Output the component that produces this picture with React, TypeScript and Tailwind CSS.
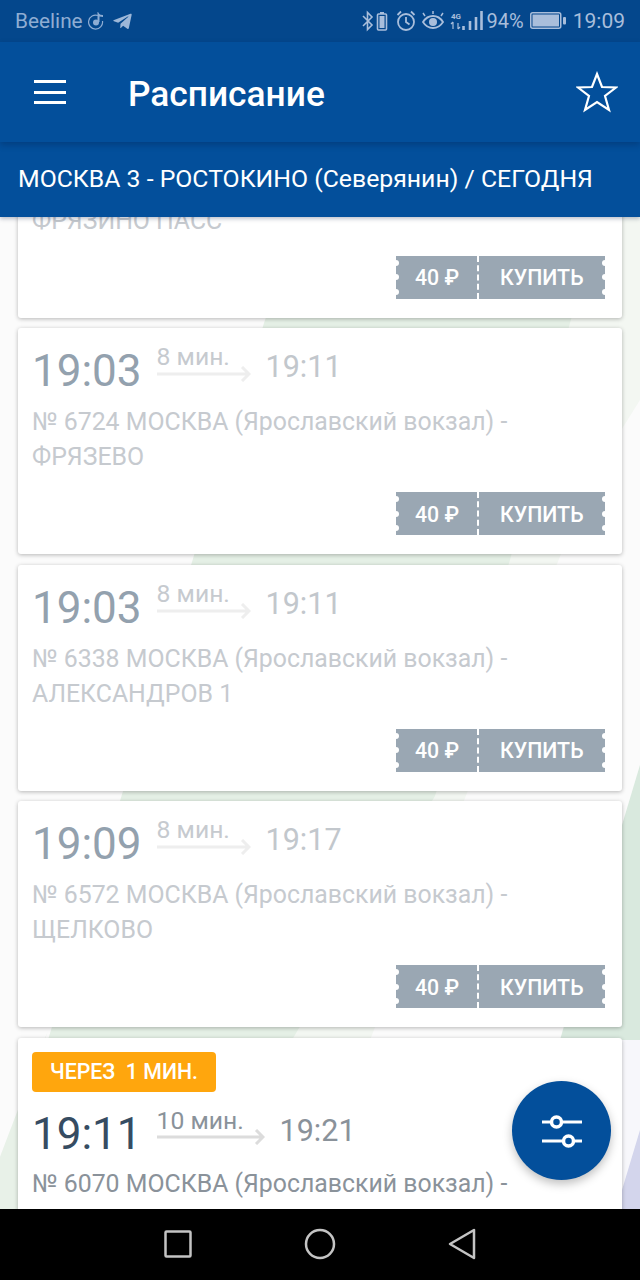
import { FaTelegramPlane } from "react-icons/fa";

type Train = {
  id: string;
  depart: string;
  arrive: string;
  duration: string;
  destination: string;
  soon?: string;
};

const trains: Train[] = [
  { id: "6122", depart: "19:00", arrive: "19:08", duration: "8 мин.", destination: "ФРЯЗИНО ПАСС" },
  { id: "6724", depart: "19:03", arrive: "19:11", duration: "8 мин.", destination: "ФРЯЗЕВО" },
  { id: "6338", depart: "19:03", arrive: "19:11", duration: "8 мин.", destination: "АЛЕКСАНДРОВ 1" },
  { id: "6572", depart: "19:09", arrive: "19:17", duration: "8 мин.", destination: "ЩЕЛКОВО" },
  { id: "6070", depart: "19:11", arrive: "19:21", duration: "10 мин.", destination: "МОНИНО", soon: "ЧЕРЕЗ  1 МИН." },
];

function Background() {
  return (
    <svg className="absolute inset-0 h-full w-full" viewBox="0 217 640 992" preserveAspectRatio="none">
      <rect x="0" y="217" width="640" height="992" fill="#fbfbfb" />
      <polygon points="640,217 640,400 590,480 370,1040 48,1040 340,217" fill="#f3f7f2" />
      <polygon points="600,217 570,323 510,560 435,796 292,1040 48,1040 264,323 300,217" fill="#e5f0e6" />
      <polygon points="48,1031 -20,1209 0,1209 18,1209 18,1100" fill="#e8f1e8" />
      <polygon points="640,765 622,825 560,1040 640,1040" fill="#d9e9de" />
      <polygon points="640,1040 640,1209 600,1209 600,1040" fill="#f7f7fb" />
      <polygon points="640,1130 622,1190 612,1209 640,1209" fill="#d3d5ec" />
    </svg>
  );
}

function StatusIcons() {
  return (
    <svg width="122" height="24" viewBox="0 0 122 24" fill="none" stroke="#a9bedb" strokeWidth="1.6">
      {/* bluetooth */}
      <path d="M1 7l9 9-4.500 4.500V3.500L10 8l-9 9" />
      {/* small battery */}
      <rect x="15.500" y="5" width="9" height="16" rx="1" />
      <rect x="17.500" y="7" width="5" height="12" fill="#a9bedb" stroke="none" />
      <rect x="18" y="3" width="4" height="2" fill="#a9bedb" stroke="none" />
      {/* alarm */}
      <circle cx="44" cy="13" r="8" strokeWidth="1.800" />
      <path d="M44 8V13l3.500 2.500M35.500 6L39 2.500M52.500 6L49 2.500" strokeWidth="1.800" />
      {/* eye */}
      <path d="M61 13c2.500-4 5.500-6 10-6s7.500 2 10 6c-2.500 4-5.500 6-10 6s-7.500-2-10-6z" strokeWidth="1.800" />
      <circle cx="71" cy="13" r="4" fill="#a9bedb" stroke="none" />
      <path d="M63 7l-2-3M71 5V2M79 7l2-3" strokeWidth="1.500" />
      {/* signal */}
      <text x="89" y="10" fontSize="8" fontWeight="700" fill="#a9bedb" stroke="none">
        4G
      </text>
      <path d="M91 13v7M91 13l-2 2" strokeWidth="1.200" />
      <path d="M96 20v-6M96 20l2-2" strokeWidth="1.200" />
      <path d="M101.500 21v-4M108 21v-9M114 21v-13M119.500 21V2" strokeWidth="2.600" />
    </svg>
  );
}

function BatteryIcon() {
  return (
    <svg width="36" height="18" viewBox="0 0 36 18" fill="none">
      <rect x="0.750" y="0.750" width="30" height="15.500" rx="2" stroke="#a9bedb" strokeWidth="1.500" />
      <rect x="2.500" y="2.500" width="26.500" height="12" fill="#a9bedb" />
      <rect x="33" y="5" width="3" height="7.500" rx="1" fill="#a9bedb" />
    </svg>
  );
}

function StatusBar() {
  return (
    <div className="flex h-[42px] shrink-0 items-center bg-[#04478c] pl-[15px] pr-[15px] text-[20px] leading-none text-[#a9bedb]">
      <span className="text-[20.800px] text-[#8fadd3]">Beeline</span>
      <svg className="ml-[5px]" width="17" height="18" viewBox="0 0 17 18" fill="none" stroke="#8fadd3" strokeWidth="1.200">
        <path d="M10 3.500A7 7 0 1 0 14.500 9" />
        <circle cx="8" cy="10.500" r="3" fill="#8fadd3" stroke="none" />
        <path d="M10.500 10V2.500c1 1.500 3 1.500 4.500 1.500" strokeWidth="2" />
      </svg>
      <FaTelegramPlane className="ml-[7px] text-[21px] text-[#9db7d8]" />
      <div className="ml-auto flex items-center">
        <StatusIcons />
        <span className="ml-[3px] text-[20px]">94%</span>
        <span className="ml-[6px]">
          <BatteryIcon />
        </span>
        <span className="ml-[7px] text-[21px]">19:09</span>
      </div>
    </div>
  );
}

function Toolbar() {
  return (
    <div className="relative z-20 flex h-[100px] shrink-0 items-center bg-[#034f9b] pl-[34px] pr-[22px] shadow-[0_3px_6px_rgba(0,20,60,0.28)]">
      <div className="flex h-[24px] w-[32px] flex-col justify-between">
        <div className="h-[3px] bg-white" />
        <div className="h-[3px] bg-white" />
        <div className="h-[3px] bg-white" />
      </div>
      <h1 className="ml-[62px] mt-[5px] text-[35.300px] font-medium leading-none text-white">Расписание</h1>
      <svg className="ml-auto" width="42" height="42" viewBox="0 0 42 42" fill="none">
        <polygon
          points="21,3 26,16 40,16.500 29,25 33,39 21,31 9,39 13,25 2,16.500 16,16"
          stroke="#fff"
          strokeWidth="2.200"
          strokeLinejoin="miter"
        />
      </svg>
    </div>
  );
}

function Notches({ side }: { side: "left" | "right" }) {
  return (
    <div
      className={[
        "absolute top-[3px] flex h-[37px] flex-col justify-between",
        side === "left" ? "left-[-3px]" : "right-[-3px]",
      ].join(" ")}
    >
      <span className="mt-[1px] h-[6px] w-[6px] rounded-full bg-white" />
      <span className="h-[6px] w-[6px] rounded-full bg-white" />
      <span className="mb-[1px] h-[6px] w-[6px] rounded-full bg-white" />
    </div>
  );
}

function BuyTicket() {
  return (
    <div className="relative ml-auto mr-[3px] flex h-[43px] w-[209px] items-center overflow-hidden bg-[#9aa7b3] text-[21.300px] font-medium leading-none text-white">
      <Notches side="left" />
      <div className="mt-[2px] w-[81px] pl-[19px]">40 ₽</div>
      <div className="h-full border-l-2 border-dashed border-white" />
      <div className="mt-[2px] pl-[21px]">КУПИТЬ</div>
      <Notches side="right" />
    </div>
  );
}

function TrainCard({ train }: { train: Train }) {
  const active = Boolean(train.soon);
  const arrowWidth = active ? 108 : 94;

  return (
    <div
      className={[
        "shrink-0 rounded-[3px] bg-white px-[14px] pt-[14px] shadow-[0_1px_4px_rgba(0,0,0,0.28)]",
        active ? "h-[240px]" : "h-[226px]",
      ].join(" ")}
    >
      {train.soon && (
        <div className="mb-[14px] flex h-[40px] w-[184px] items-center whitespace-pre rounded-[4px] bg-[#ffa60d] pl-[18px] text-[21.300px] font-medium leading-none text-white">
          {train.soon}
        </div>
      )}
      <div className={["flex items-start", active ? "h-[54px]" : "h-[56px]"].join(" ")}>
        <span
          className={[
            "text-[44px] leading-[50px]",
            active ? "mt-[3px] text-[#364c62]" : "mt-[4px] text-[#93a1ae]",
          ].join(" ")}
        >
          {train.depart}
        </span>
        <div className="ml-[15px]">
          <div
            className={[
              "mt-[1px] text-[24.700px] leading-[28px]",
              active ? "text-[#8a929a]" : "text-[#c6cacf]",
            ].join(" ")}
          >
            {train.duration}
          </div>
          <svg
            className={["block", active ? "mt-[-6px]" : "mt-[-5px]"].join(" ")}
            width={arrowWidth}
            height="16"
            viewBox={`0 0 ${arrowWidth} 16`}
            fill="none"
          >
            <path
              d={`M0 8H${arrowWidth - 2}M${arrowWidth - 9} 1l7 7-7 7`}
              stroke={active ? "#dcdcdc" : "#eeeeee"}
              strokeWidth="3"
            />
          </svg>
        </div>
        <span
          className={[
            "ml-[15px] mt-[7px] text-[30.500px] leading-[36px]",
            active ? "text-[#8a929a]" : "text-[#c2c7cc]",
          ].join(" ")}
        >
          {train.arrive}
        </span>
      </div>
      <div
        className={[
          "mt-[6px] h-[70px] text-[24.850px] leading-[35px]",
          active ? "text-[#8a929a]" : "text-[#c6cacf]",
        ].join(" ")}
      >
        <div>№ {train.id} МОСКВА (Ярославский вокзал) -</div>
        <div>{train.destination}</div>
      </div>
      <div className="mt-[18px] flex">
        <BuyTicket />
      </div>
    </div>
  );
}

function NavBar() {
  return (
    <div className="z-20 flex h-[71px] shrink-0 items-center justify-center bg-black">
      <svg width="640" height="71" viewBox="0 0 640 71" fill="none" stroke="#c4c4c4" strokeWidth="2.500">
        <rect x="165.500" y="22.500" width="25" height="25" rx="1" />
        <circle cx="320" cy="35" r="14" />
        <path d="M450 35l24-14v28z" strokeLinejoin="round" />
      </svg>
    </div>
  );
}

export default function App() {
  return (
    <div
      className="relative flex h-[1280px] w-[640px] flex-col overflow-hidden bg-[#fbfbfb]"
      style={{ fontFamily: "Roboto, sans-serif" }}
    >
      <StatusBar />
      <Toolbar />
      <div className="relative z-10 flex h-[75px] shrink-0 items-center whitespace-nowrap bg-[#034f9b] pl-[18px] text-[24.800px] leading-none text-white shadow-[0_2px_4px_rgba(0,20,60,0.25)]">
        МОСКВА 3 - РОСТОКИНО (Северянин) / СЕГОДНЯ
      </div>
      <div className="relative min-h-0 flex-1 overflow-hidden">
        <Background />
        <div className="relative mt-[-125.500px] flex flex-col gap-[10.500px] px-[18px]">
          {trains.map((train) => (
            <TrainCard key={train.id} train={train} />
          ))}
        </div>
      </div>
      <NavBar />
      <button
        type="button"
        className="absolute left-[512px] top-[1081px] z-30 flex h-[99px] w-[99px] items-center justify-center rounded-full bg-[#034f9b] shadow-[0_4px_10px_rgba(0,0,0,0.25)]"
      >
        <svg width="42" height="34" viewBox="0 0 42 34" fill="none" stroke="#fff" strokeWidth="3">
          <path d="M1 8h10M20 8h21M1 27h22M32 27h9" />
          <circle cx="15.500" cy="8" r="5" strokeWidth="3.500" />
          <circle cx="27.500" cy="27" r="5" strokeWidth="3.500" />
        </svg>
      </button>
    </div>
  );
}
